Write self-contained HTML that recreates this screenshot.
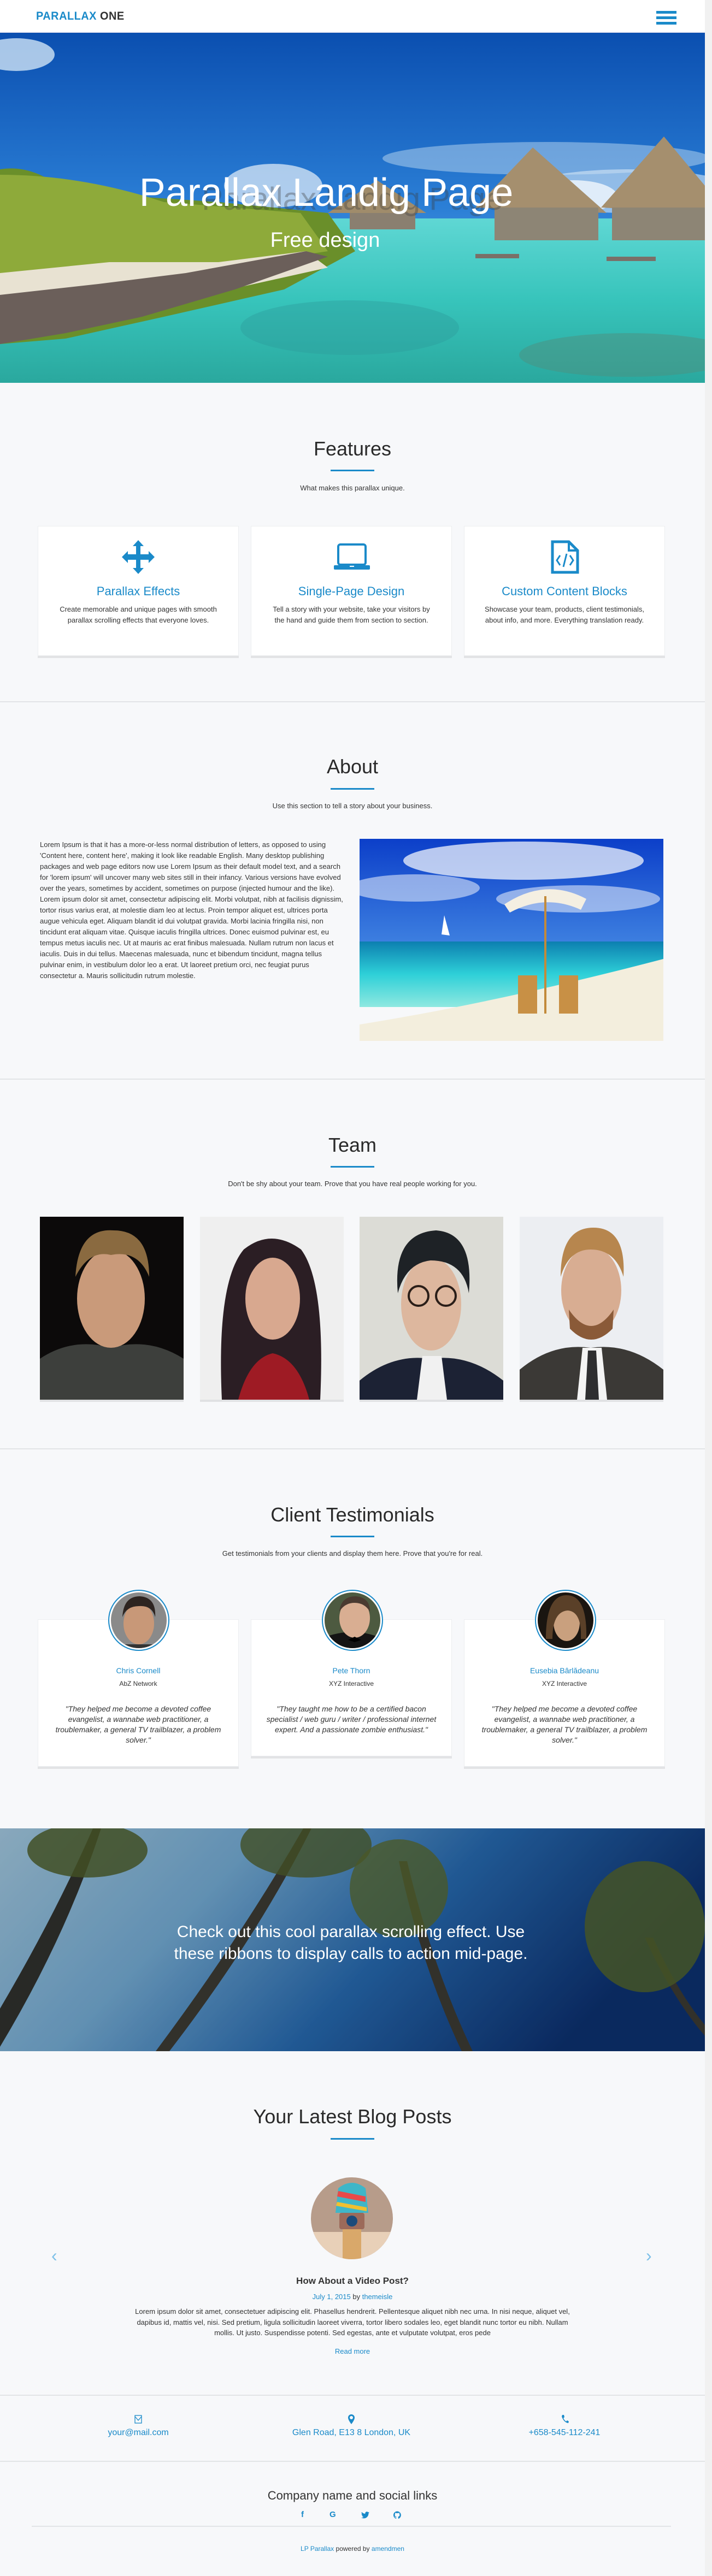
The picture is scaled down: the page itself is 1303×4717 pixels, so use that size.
<!DOCTYPE html>
<html><head><meta charset="utf-8">
<style>
*{margin:0;padding:0;box-sizing:border-box}
body{width:1303px;height:4717px;background:#f7f8fa;font-family:"Liberation Sans",Arial,sans-serif;color:#333;position:relative;overflow:hidden}
.abs{position:absolute}
.sec{position:absolute;left:0;width:1290px}
.t{position:absolute;left:0;width:1290px;text-align:center}
.h2{font-size:36px;line-height:40px;color:#2a2a2a}
.div{position:absolute;left:605px;width:80px;height:3px;background:#1a8ac9}
.sub{font-size:13px;line-height:20px;color:#333}
.line{position:absolute;left:0;width:1290px;height:2px;background:#e2e4e7}
.card{position:absolute;background:#fff;border:1px solid #eceef0;box-shadow:0 4px 0 #e2e3e5}
.blue{color:#1a8ac9}
#scroll{position:absolute;left:1290px;top:0;width:13px;height:4717px;background:#f1f1f1}
</style></head><body>

<!-- header -->
<div class="sec" style="top:0;height:60px;background:#fff;border-bottom:1px solid #dde;z-index:2">
  <div class="abs" style="left:66px;top:19px;font-size:21px;font-weight:bold;letter-spacing:0.5px;line-height:22px;transform:scaleX(0.95);transform-origin:left"><span style="color:#1a8ac9">PARALLAX</span> <span style="color:#333">ONE</span></div>
  <div class="abs" style="left:1201px;top:20px;width:37px;height:5px;background:#1a8ac9"></div>
  <div class="abs" style="left:1201px;top:30px;width:37px;height:5px;background:#1a8ac9"></div>
  <div class="abs" style="left:1201px;top:40px;width:37px;height:5px;background:#1a8ac9"></div>
</div>

<!-- hero -->
<div class="sec" style="top:60px;height:641px;overflow:hidden">
<svg width="1290" height="641" viewBox="0 0 1290 641">
<defs>
<linearGradient id="sky" x1="0" y1="0" x2="0" y2="1"><stop offset="0" stop-color="#0b4fb0"/><stop offset="0.5" stop-color="#2b7fd6"/><stop offset="1" stop-color="#8cc2ea"/></linearGradient>
<linearGradient id="sea" x1="0" y1="0" x2="0" y2="1"><stop offset="0" stop-color="#5fd7d4"/><stop offset="0.5" stop-color="#37c4bb"/><stop offset="1" stop-color="#2aa89e"/></linearGradient>
</defs>
<rect width="1290" height="641" fill="url(#sky)"/>
<ellipse cx="30" cy="40" rx="70" ry="30" fill="#cfe3f5" opacity="0.8"/>
<ellipse cx="1000" cy="230" rx="300" ry="30" fill="#bcd8f0" opacity="0.5"/>
<ellipse cx="1150" cy="290" rx="200" ry="40" fill="#d8e9f7" opacity="0.6"/>
<ellipse cx="500" cy="280" rx="90" ry="40" fill="#e8f1fa" opacity="0.7"/>
<ellipse cx="1050" cy="300" rx="80" ry="30" fill="#f2f7fc" opacity="0.8"/>
<rect y="340" width="1290" height="301" fill="url(#sea)"/>
<path d="M0 250 Q60 240 120 290 L250 300 L400 310 L600 330 L650 400 L520 470 L300 520 L120 560 L0 570 Z" fill="#6a8f2a"/>
<path d="M0 260 Q150 260 300 310 L550 330 L600 400 L400 430 L200 440 L0 450 Z" fill="#8eaa3a"/>
<path d="M0 440 L200 420 L400 420 L560 400 L600 430 L420 470 L250 500 L100 530 L0 540 Z" fill="#e8e2d2"/>
<path d="M0 480 L180 460 L340 440 L560 400 L600 410 L430 470 L260 520 L120 550 L0 570 Z" fill="#6b5f5a"/>
<ellipse cx="640" cy="540" rx="200" ry="50" fill="#2e9a9a" opacity="0.4"/>
<ellipse cx="1150" cy="590" rx="200" ry="40" fill="#4d8f80" opacity="0.5"/>
<path d="M600 330 L690 270 L780 330 Z" fill="#a08c6b"/>
<rect x="640" y="330" width="120" height="30" fill="#8a7f70"/>
<path d="M870 320 L975 210 L1110 330 Z" fill="#a58f6e"/>
<rect x="905" y="320" width="190" height="60" fill="#8d8575"/>
<path d="M1100 320 L1215 190 L1290 280 L1290 330 Z" fill="#a58f6e"/>
<rect x="1120" y="320" width="170" height="60" fill="#8d8575"/>
<rect x="870" y="405" width="80" height="8" fill="#7a7068"/>
<rect x="1110" y="410" width="90" height="8" fill="#7a7068"/>
</svg>
<div class="t" style="top:270px;font-size:58px;line-height:70px;color:rgba(60,60,60,0.35);left:0px">Parallax Landig Page</div>
<div class="t" style="top:253px;font-size:72px;line-height:80px;color:#fff;left:-48px">Parallax Landig Page</div>
<div class="t" style="top:357px;font-size:38px;line-height:46px;color:#fff;left:-50px">Free design</div>
</div>

<!-- features -->
<div class="sec" style="top:701px;height:584px">
  <div class="t h2" style="top:101px">Features</div>
  <div class="div" style="top:159px"></div>
  <div class="t sub" style="top:183px">What makes this parallax unique.</div>
  <div class="card" style="left:69px;top:262px;width:368px;height:238px">
    <svg class="abs" style="left:153px;top:25px" width="60" height="62" viewBox="0 0 60 62"><path fill="#1a8ac9" d="M30 0 L40 11 L34 11 L34 26 L49 26 L49 20 L60 31 L49 42 L49 36 L34 36 L34 51 L40 51 L30 62 L20 51 L26 51 L26 36 L11 36 L11 42 L0 31 L11 20 L11 26 L26 26 L26 11 L20 11 Z"/></svg>
    <div class="t blue" style="width:366px;top:106px;font-size:22px;line-height:26px">Parallax Effects</div>
    <div class="t sub" style="width:366px;top:142px;padding:0 30px">Create memorable and unique pages with smooth parallax scrolling effects that everyone loves.</div>
  </div>
  <div class="card" style="left:459px;top:262px;width:368px;height:238px">
    <svg class="abs" style="left:151px;top:31px" width="66" height="48" viewBox="0 0 66 48"><rect x="8" y="2" width="50" height="37" rx="4" fill="none" stroke="#1a8ac9" stroke-width="4"/><rect x="0" y="40" width="66" height="8" rx="2" fill="#1a8ac9"/><rect x="29" y="41" width="8" height="2" fill="#fff"/></svg>
    <div class="t blue" style="width:366px;top:106px;font-size:22px;line-height:26px">Single-Page Design</div>
    <div class="t sub" style="width:366px;top:142px;padding:0 30px">Tell a story with your website, take your visitors by the hand and guide them from section to section.</div>
  </div>
  <div class="card" style="left:849px;top:262px;width:368px;height:238px">
    <svg class="abs" style="left:158px;top:25px" width="52" height="62" viewBox="0 0 52 62"><path d="M3 3 L33 3 L49 19 L49 59 L3 59 Z" fill="none" stroke="#1a8ac9" stroke-width="5"/><path d="M33 3 L33 19 L49 19" fill="none" stroke="#1a8ac9" stroke-width="4"/><path d="M17 28 L11 37 L17 46 M35 28 L41 37 L35 46 M29 25 L23 49" fill="none" stroke="#1a8ac9" stroke-width="3"/></svg>
    <div class="t blue" style="width:366px;top:106px;font-size:22px;line-height:26px">Custom Content Blocks</div>
    <div class="t sub" style="width:366px;top:142px;padding:0 25px">Showcase your team, products, client testimonials, about info, and more. Everything translation ready.</div>
  </div>
  <div class="line" style="top:583px"></div>
</div>

<!-- about -->
<div class="sec" style="top:1285px;height:691px">
  <div class="t h2" style="top:99px">About</div>
  <div class="div" style="top:158px"></div>
  <div class="t sub" style="top:181px">Use this section to tell a story about your business.</div>
  <div class="abs sub" style="left:73px;top:252px;width:555px;font-size:13px;line-height:20px">Lorem Ipsum is that it has a more-or-less normal distribution of letters, as opposed to using 'Content here, content here', making it look like readable English. Many desktop publishing packages and web page editors now use Lorem Ipsum as their default model text, and a search for 'lorem ipsum' will uncover many web sites still in their infancy. Various versions have evolved over the years, sometimes by accident, sometimes on purpose (injected humour and the like). Lorem ipsum dolor sit amet, consectetur adipiscing elit. Morbi volutpat, nibh at facilisis dignissim, tortor risus varius erat, at molestie diam leo at lectus. Proin tempor aliquet est, ultrices porta augue vehicula eget. Aliquam blandit id dui volutpat gravida. Morbi lacinia fringilla nisi, non tincidunt erat aliquam vitae. Quisque iaculis fringilla ultrices. Donec euismod pulvinar est, eu tempus metus iaculis nec. Ut at mauris ac erat finibus malesuada. Nullam rutrum non lacus et iaculis. Duis in dui tellus. Maecenas malesuada, nunc et bibendum tincidunt, magna tellus pulvinar enim, in vestibulum dolor leo a erat. Ut laoreet pretium orci, nec feugiat purus consectetur a. Mauris sollicitudin rutrum molestie.</div>
  <svg class="abs" style="left:658px;top:251px" width="556" height="370" viewBox="0 0 556 370">
    <defs><linearGradient id="as" x1="0" y1="0" x2="0" y2="1"><stop offset="0" stop-color="#0c3fc9"/><stop offset="1" stop-color="#3d7fe0"/></linearGradient>
    <linearGradient id="aw" x1="0" y1="0" x2="0" y2="1"><stop offset="0" stop-color="#0c7fb0"/><stop offset="0.5" stop-color="#2ed0d8"/><stop offset="1" stop-color="#8ee8e0"/></linearGradient></defs>
    <rect width="556" height="190" fill="url(#as)"/>
    <ellipse cx="300" cy="40" rx="220" ry="35" fill="#fff" opacity="0.7"/>
    <ellipse cx="100" cy="90" rx="120" ry="25" fill="#fff" opacity="0.5"/>
    <ellipse cx="400" cy="110" rx="150" ry="25" fill="#fff" opacity="0.5"/>
    <rect y="188" width="556" height="120" fill="url(#aw)"/>
    <path d="M0 370 L0 340 Q250 300 556 220 L556 370 Z" fill="#f3eedd"/>
    <path d="M150 175 L155 140 L165 177 Z" fill="#fff"/>
    <path d="M265 120 Q340 70 415 110 L405 130 Q340 100 275 135 Z" fill="#f4efe2"/>
    <rect x="338" y="105" width="4" height="215" fill="#c28a3a"/>
    <rect x="290" y="250" width="35" height="70" fill="#c89045"/>
    <rect x="365" y="250" width="35" height="70" fill="#c89045"/>
  </svg>
  <div class="line" style="top:690px"></div>
</div>

<!-- team -->
<div class="sec" style="top:1976px;height:677px">
  <div class="t h2" style="top:101px">Team</div>
  <div class="div" style="top:159px"></div>
  <div class="t sub" style="top:182px">Don't be shy about your team. Prove that you have real people working for you.</div>
  <svg class="abs" style="left:73px;top:252px" width="263" height="339" viewBox="0 0 263 339"><rect width="263" height="339" fill="#e0e1e3"/><rect width="263" height="335" fill="#0c0a0a"/><path d="M0 335 L0 260 Q60 220 130 240 Q200 220 263 260 L263 335 Z" fill="#3d3f3c"/><ellipse cx="130" cy="150" rx="62" ry="90" fill="#c99a7a"/><path d="M65 110 Q70 20 135 25 Q200 25 200 110 Q180 60 130 70 Q90 60 65 110 Z" fill="#8a6a40"/></svg>
  <svg class="abs" style="left:366px;top:252px" width="263" height="339" viewBox="0 0 263 339"><rect width="263" height="339" fill="#e0e1e3"/><rect width="263" height="335" fill="#efefef"/><path d="M40 335 Q30 120 80 60 Q130 20 185 60 Q230 120 220 335 Z" fill="#2b1e24"/><ellipse cx="133" cy="150" rx="50" ry="75" fill="#d8a88f"/><path d="M70 335 Q90 260 133 250 Q180 260 200 335 Z" fill="#9e1b24"/></svg>
  <svg class="abs" style="left:658px;top:252px" width="263" height="339" viewBox="0 0 263 339"><rect width="263" height="339" fill="#e0e1e3"/><rect width="263" height="335" fill="#dcdcd6"/><path d="M0 335 L0 300 Q60 250 130 260 Q200 250 263 300 L263 335 Z" fill="#1c2234"/><path d="M105 335 L115 255 L150 255 L160 335 Z" fill="#f1f1f1"/><ellipse cx="131" cy="160" rx="55" ry="85" fill="#ddb79e"/><path d="M70 140 Q60 30 140 25 Q210 30 200 140 Q190 80 130 80 Q85 85 70 140 Z" fill="#1e2226"/><circle cx="108" cy="145" r="18" fill="none" stroke="#2a1e18" stroke-width="4"/><circle cx="158" cy="145" r="18" fill="none" stroke="#2a1e18" stroke-width="4"/></svg>
  <svg class="abs" style="left:951px;top:252px" width="263" height="339" viewBox="0 0 263 339"><rect width="263" height="339" fill="#e0e1e3"/><rect width="263" height="335" fill="#eceef2"/><path d="M0 335 L0 280 Q60 230 130 240 Q200 230 263 280 L263 335 Z" fill="#3b3936"/><path d="M105 335 L115 240 L150 240 L160 335 Z" fill="#f4f4f4"/><path d="M125 245 L140 245 L145 335 L120 335 Z" fill="#2e2e30"/><ellipse cx="131" cy="135" rx="55" ry="80" fill="#d8ad92"/><path d="M90 170 Q131 230 172 170 L170 205 Q131 245 92 205 Z" fill="#8a5a38"/><path d="M75 110 Q75 20 135 20 Q195 20 190 110 Q175 60 130 60 Q90 60 75 110 Z" fill="#b7864e"/></svg>
  <div class="line" style="top:676px"></div>
</div>

<!-- testimonials -->
<div class="sec" style="top:2653px;height:695px">
  <div class="t h2" style="top:101px">Client Testimonials</div>
  <div class="div" style="top:159px"></div>
  <div class="t sub" style="top:182px">Get testimonials from your clients and display them here. Prove that you're for real.</div>

  <div class="card" style="left:69px;top:312px;width:368px;height:270px">
    <div class="t blue" style="width:366px;top:83px;font-size:14px;line-height:20px">Chris Cornell</div>
    <div class="t" style="width:366px;top:107px;font-size:12px;line-height:20px">AbZ Network</div>
    <div class="t" style="width:366px;top:154px;font-size:14px;line-height:19px;font-style:italic;padding:0 28px">"They helped me become a devoted coffee evangelist, a wannabe web practitioner, a troublemaker, a general TV trailblazer, a problem solver."</div>
  </div>
  <div class="card" style="left:459px;top:312px;width:368px;height:251px">
    <div class="t blue" style="width:366px;top:83px;font-size:14px;line-height:20px">Pete Thorn</div>
    <div class="t" style="width:366px;top:107px;font-size:12px;line-height:20px">XYZ Interactive</div>
    <div class="t" style="width:366px;top:154px;font-size:14px;line-height:19px;font-style:italic;padding:0 24px">"They taught me how to be a certified bacon specialist / web guru / writer / professional internet expert. And a passionate zombie enthusiast."</div>
  </div>
  <div class="card" style="left:849px;top:312px;width:368px;height:270px">
    <div class="t blue" style="width:366px;top:83px;font-size:14px;line-height:20px">Eusebia Bârlădeanu</div>
    <div class="t" style="width:366px;top:107px;font-size:12px;line-height:20px">XYZ Interactive</div>
    <div class="t" style="width:366px;top:154px;font-size:14px;line-height:19px;font-style:italic;padding:0 28px">"They helped me become a devoted coffee evangelist, a wannabe web practitioner, a troublemaker, a general TV trailblazer, a problem solver."</div>
  </div>
  <svg class="abs" style="left:198px;top:258px" width="112" height="112" viewBox="0 0 112 112"><circle cx="56" cy="56" r="55" fill="#fff" stroke="#1a8ac9" stroke-width="2"/><clipPath id="c1"><circle cx="56" cy="56" r="51"/></clipPath><g clip-path="url(#c1)"><rect width="112" height="112" fill="#8a8a8a"/><ellipse cx="56" cy="62" rx="28" ry="38" fill="#c89878"/><path d="M26 50 Q28 12 58 12 Q88 14 86 50 Q80 28 56 30 Q34 30 26 50Z" fill="#2d2420"/><rect x="0" y="100" width="112" height="12" fill="#333"/></g></svg>
  <svg class="abs" style="left:589px;top:258px" width="112" height="112" viewBox="0 0 112 112"><circle cx="56" cy="56" r="55" fill="#fff" stroke="#1a8ac9" stroke-width="2"/><clipPath id="c2"><circle cx="56" cy="56" r="51"/></clipPath><g clip-path="url(#c2)"><rect width="112" height="112" fill="#4d5a40"/><path d="M0 112 L10 85 Q56 70 100 85 L112 112Z" fill="#141414"/><ellipse cx="60" cy="52" rx="28" ry="36" fill="#d9ae92"/><path d="M32 40 Q35 12 62 12 Q88 14 88 40 Q78 24 60 24 Q42 24 32 40Z" fill="#4a3a30"/><path d="M48 92 L60 86 L72 92 L60 96Z" fill="#000"/></g></svg>
  <svg class="abs" style="left:979px;top:258px" width="112" height="112" viewBox="0 0 112 112"><circle cx="56" cy="56" r="55" fill="#fff" stroke="#1a8ac9" stroke-width="2"/><clipPath id="c3"><circle cx="56" cy="56" r="51"/></clipPath><g clip-path="url(#c3)"><rect width="112" height="112" fill="#1a1510"/><ellipse cx="58" cy="60" rx="24" ry="34" fill="#c9a07e"/><path d="M20 90 Q20 10 58 10 Q96 10 94 90 L84 90 Q86 40 60 38 Q32 40 32 90Z" fill="#5a4028"/></g></svg>
</div>

<!-- ribbon -->
<div class="sec" style="top:3348px;height:408px;overflow:hidden">
<svg width="1290" height="408" viewBox="0 0 1290 408">
<defs><linearGradient id="rb" x1="0" y1="0" x2="1" y2="0.3"><stop offset="0" stop-color="#9cc0d6"/><stop offset="0.35" stop-color="#6fa4cb"/><stop offset="0.65" stop-color="#2565a8"/><stop offset="1" stop-color="#0c2f6c"/></linearGradient></defs>
<rect width="1290" height="408" fill="url(#rb)"/>
<path d="M170 0 L185 0 Q120 200 0 400 L0 330 Q100 160 170 0Z" fill="#2e2f2c"/>
<path d="M555 0 L570 0 Q470 200 310 408 L285 408 Q440 200 555 0Z" fill="#3a3832"/>
<path d="M730 60 L745 60 Q790 250 865 408 L845 408 Q770 250 730 60Z" fill="#3a3832"/>
<path d="M1180 200 L1195 200 Q1240 300 1290 360 L1290 380 Q1230 310 1180 200Z" fill="#3a3832"/>
<ellipse cx="160" cy="40" rx="110" ry="50" fill="#4b5a2a" opacity="0.85"/>
<ellipse cx="560" cy="30" rx="120" ry="60" fill="#4b5a2a" opacity="0.8"/>
<ellipse cx="730" cy="110" rx="90" ry="90" fill="#55652e" opacity="0.8"/>
<ellipse cx="1180" cy="180" rx="110" ry="120" fill="#4f5f2c" opacity="0.85"/>
<rect width="1290" height="408" fill="#000" opacity="0.12"/>
</svg>
<div class="t" style="top:170px;left:-3px;font-size:30px;line-height:40px;color:#fff">Check out this cool parallax scrolling effect. Use<br>these ribbons to display calls to action mid-page.</div>
</div>

<!-- blog -->
<div class="sec" style="top:3756px;height:630px">
  <div class="t h2" style="top:100px">Your Latest Blog Posts</div>
  <div class="div" style="top:159px"></div>
  <svg class="abs" style="left:569px;top:231px" width="150" height="150" viewBox="0 0 150 150"><clipPath id="bc"><circle cx="75" cy="75" r="75"/></clipPath><g clip-path="url(#bc)"><rect width="150" height="150" fill="#b79c8a"/><rect y="100" width="150" height="50" fill="#e8d0b8"/><path d="M50 20 Q75 0 100 20 L105 65 L45 65Z" fill="#3fb6c8"/><path d="M50 25 L100 35 L100 45 L48 35Z" fill="#e84a4a"/><path d="M48 45 L102 55 L102 62 L46 52Z" fill="#f0c030"/><rect x="52" y="65" width="46" height="30" rx="4" fill="#9c6a5a"/><circle cx="75" cy="80" r="10" fill="#1b4a7a"/><rect x="58" y="95" width="34" height="55" fill="#d9a86a"/></g></svg>
  <div class="abs" style="left:94px;top:356px;font-size:32px;color:#7cc0e8">&#8249;</div>
  <div class="abs" style="left:1182px;top:356px;font-size:32px;color:#7cc0e8">&#8250;</div>
  <div class="t" style="top:410px;font-size:17px;line-height:22px;font-weight:bold;color:#333">How About a Video Post?</div>
  <div class="t" style="top:440px;font-size:13px;line-height:20px"><span class="blue">July 1, 2015</span> by <span class="blue">themeisle</span></div>
  <div class="t sub" style="top:467px;font-size:13px;line-height:19.5px;padding:0 240px">Lorem ipsum dolor sit amet, consectetuer adipiscing elit. Phasellus hendrerit. Pellentesque aliquet nibh nec urna. In nisi neque, aliquet vel, dapibus id, mattis vel, nisi. Sed pretium, ligula sollicitudin laoreet viverra, tortor libero sodales leo, eget blandit nunc tortor eu nibh. Nullam mollis. Ut justo. Suspendisse potenti. Sed egestas, ante et vulputate volutpat, eros pede</div>
  <div class="t blue" style="top:540px;font-size:13px;line-height:20px">Read more</div>
  <div class="line" style="top:629px"></div>
</div>

<!-- contact -->
<div class="sec" style="top:4386px;height:121px">
  <svg class="abs" style="left:246px;top:36px" width="14" height="16" viewBox="0 0 14 16"><rect x="1" y="1" width="12" height="14" fill="none" stroke="#1a8ac9" stroke-width="1.3"/><path d="M1 3 L7 10 L13 3" fill="none" stroke="#1a8ac9" stroke-width="1.3"/></svg>
  <svg class="abs" style="left:637px;top:35px" width="12" height="18" viewBox="0 0 12 18"><path d="M6 0 A6 6 0 0 1 12 6 Q12 10 6 18 Q0 10 0 6 A6 6 0 0 1 6 0Z M6 3 A3 3 0 1 0 6.01 3Z" fill="#1a8ac9" fill-rule="evenodd"/></svg>
  <svg class="abs" style="left:1027px;top:35px" width="14" height="17" viewBox="0 0 14 17"><path d="M2 1 L5 1 L6 5 L4 7 Q6 11 9 13 L11 11 L14 13 L13 16 Q5 15 1 4Z" fill="#1a8ac9"/></svg>
  <div class="abs blue" style="left:153px;width:200px;text-align:center;top:59px;font-size:16px;line-height:20px">your@mail.com</div>
  <div class="abs blue" style="left:493px;width:300px;text-align:center;top:59px;font-size:16px;line-height:20px">Glen Road, E13 8 London, UK</div>
  <div class="abs blue" style="left:933px;width:200px;text-align:center;top:59px;font-size:16px;line-height:20px">+658-545-112-241</div>
  <div class="line" style="top:120px"></div>
</div>

<!-- footer -->
<div class="sec" style="top:4507px;height:210px">
  <div class="t" style="top:50px;font-size:22px;line-height:26px;color:#333">Company name and social links</div>
  <div class="abs blue" style="left:551px;top:89px;font-size:15px;font-weight:bold">f</div>
  <div class="abs blue" style="left:603px;top:89px;font-size:15px;font-weight:bold">G</div>
  <svg class="abs" style="left:661px;top:92px" width="15" height="13" viewBox="0 0 24 20"><path d="M24 2.4a10 10 0 0 1-2.8.8A5 5 0 0 0 23.3.4a10 10 0 0 1-3.1 1.2A4.9 4.9 0 0 0 11.8 6 14 14 0 0 1 1.7.9a4.9 4.9 0 0 0 1.5 6.6A4.9 4.9 0 0 1 1 6.9a4.9 4.9 0 0 0 3.9 4.8 5 5 0 0 1-2.2.1 4.9 4.9 0 0 0 4.6 3.4A9.9 9.9 0 0 1 0 17.3 14 14 0 0 0 7.5 19.5c9.1 0 14-7.5 14-14v-.6A10 10 0 0 0 24 2.4z" fill="#1a8ac9"/></svg>
  <svg class="abs" style="left:720px;top:91px" width="14" height="15" viewBox="0 0 16 16"><path d="M8 0a8 8 0 0 0-2.5 15.6c.4 0 .5-.2.5-.4v-1.5c-2.2.5-2.7-1-2.7-1-.4-.9-.9-1.2-.9-1.200-.7-.5.1-.5.1-.5.8.1 1.2.8 1.2.8.7 1.3 1.9.9 2.3.7.1-.5.3-.9.5-1.1-1.8-.2-3.6-.9-3.6-4 0-.9.3-1.6.8-2.1-.1-.2-.4-1 .1-2.1 0 0 .7-.2 2.2.8a7.600 7.600 0 0 1 4 0c1.5-1 2.2-.8 2.2-.8.4 1.1.2 1.9.1 2.1.5.6.8 1.3.8 2.1 0 3.1-1.9 3.8-3.6 4 .3.3.5.8.5 1.5v2.2c0 .2.1.5.6.4A8 8 0 0 0 8 0z" fill="#1a8ac9"/></svg>
  <div class="abs" style="left:58px;top:118px;width:1170px;height:2px;background:#e2e4e7"></div>
  <div class="t" style="top:151px;font-size:12px;line-height:18px;color:#333"><span class="blue">LP Parallax</span> powered by <span class="blue">amendmen</span></div>
</div>

<div id="scroll"></div>
</body></html>
